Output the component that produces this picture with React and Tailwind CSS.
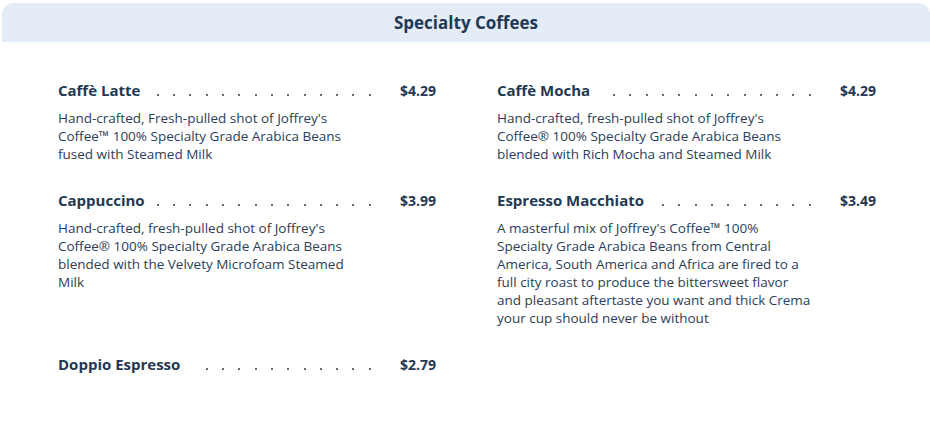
const items = [
  {
    name: "Caffè Latte",
    price: "$4.29",
    lines: [
      "Hand-crafted, Fresh-pulled shot of Joffrey's",
      "Coffee™ 100% Specialty Grade Arabica Beans",
      "fused with Steamed Milk",
    ],
  },
  {
    name: "Caffè Mocha",
    price: "$4.29",
    lines: [
      "Hand-crafted, fresh-pulled shot of Joffrey's",
      "Coffee® 100% Specialty Grade Arabica Beans",
      "blended with Rich Mocha and Steamed Milk",
    ],
  },
  {
    name: "Cappuccino",
    price: "$3.99",
    lines: [
      "Hand-crafted, fresh-pulled shot of Joffrey's",
      "Coffee® 100% Specialty Grade Arabica Beans",
      "blended with the Velvety Microfoam Steamed",
      "Milk",
    ],
  },
  {
    name: "Espresso Macchiato",
    price: "$3.49",
    lines: [
      "A masterful mix of Joffrey's Coffee™ 100%",
      "Specialty Grade Arabica Beans from Central",
      "America, South America and Africa are fired to a",
      "full city roast to produce the bittersweet flavor",
      "and pleasant aftertaste you want and thick Crema",
      "your cup should never be without",
    ],
  },
  { name: "Doppio Espresso", price: "$2.79", lines: [] },
];

// dot leader: cells of 16.3px with the dot on their left edge, packed to the right
function Leader() {
  return (
    <div className="flex-1 min-w-0 flex pl-[11px] pr-[11px] h-[22px]">
      <div className="flex-1 min-w-0 flex justify-end overflow-hidden">
        {Array.from({ length: 30 }).map((_, i) => (
          <span key={i} className="shrink-0 w-[16.3px] h-[22px] flex items-end pb-[5px]">
            <span className="w-[2px] h-[2px] rounded-full bg-[#253a55]" />
          </span>
        ))}
      </div>
    </div>
  );
}

function MenuItem({ item }) {
  return (
    <div className="mb-[26px] min-w-0">
      <div className="flex items-center h-[22px]">
        <span className="shrink-0 whitespace-nowrap text-[15px] font-bold text-[#233853]">{item.name}</span>
        <Leader />
        <span className="shrink-0 w-[40px] text-right whitespace-nowrap text-[14px] font-bold text-[#233853]">{item.price}</span>
      </div>
      {item.lines.length > 0 && (
        <div className="mt-[8px] text-[13.5px] leading-[18px] text-[#2b3e57]">
          {item.lines.map((l) => (
            <div key={l} className="whitespace-nowrap">{l}</div>
          ))}
        </div>
      )}
    </div>
  );
}

export default function App() {
  return (
    <div className="w-[930px] h-[431px] bg-white pt-[3px] pl-[2px] font-['Open_Sans','Noto_Sans',sans-serif] overflow-hidden">
      <div className="h-[39px] bg-[#e4ecf7] rounded-t-[12px] flex items-center justify-center">
        <h2 className="text-[17px] font-bold text-[#233853]">Specialty Coffees</h2>
      </div>
      <div className="grid grid-cols-[378px_379px] gap-x-[61px] pl-[56px] pt-[37px]">
        {items.map((it) => (
          <MenuItem key={it.name} item={it} />
        ))}
      </div>
    </div>
  );
}
